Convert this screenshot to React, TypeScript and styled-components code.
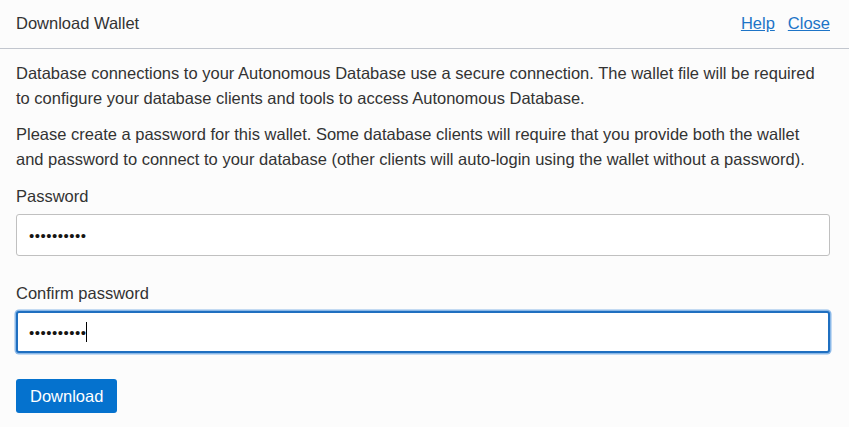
import styled, { createGlobalStyle, css } from "styled-components";

const GlobalStyle = createGlobalStyle`
  html, body {
    margin: 0;
    padding: 0;
    background: #fcfcfc;
  }
  body {
    font-family: "Liberation Sans", Arial, sans-serif;
    color: #333333;
  }
`;

const Dialog = styled.div`
  width: 849px;
  height: 427px;
  background: #fcfcfc;
  box-sizing: border-box;
  overflow: hidden;
`;

const Header = styled.header`
  height: 48px;
  display: flex;
  align-items: center;
  justify-content: space-between;
  padding: 0 19px 0 16px;
  border-bottom: 1px solid #c2c6ce;
`;

const Title = styled.h1`
  margin: 0;
  font-size: 16.5px;
  font-weight: normal;
  color: #333333;
  padding-bottom: 2px;
`;

const Links = styled.nav`
  display: flex;
  gap: 13px;
  padding-bottom: 2px;
`;

const HeaderLink = styled.a`
  font-size: 16.5px;
  color: #1d74c7;
  text-decoration: underline;
  cursor: pointer;
`;

const Body = styled.div`
  padding: 12px 19px 0 16px;
  display: flex;
  flex-direction: column;
`;

const Paragraph = styled.p`
  margin: 0 0 12px;
  font-size: 16.5px;
  line-height: 24.5px;
  color: #333333;
`;

const Field = styled.div`
  display: flex;
  flex-direction: column;
  margin-top: 1px;
  & + & {
    margin-top: 25px;
  }
`;

const Label = styled.label`
  font-size: 16.5px;
  line-height: 24px;
  color: #333333;
  margin-bottom: 6px;
`;

const InputWrap = styled.div`
  position: relative;
`;

const inputText = css`
  font-family: "Liberation Sans", Arial, sans-serif;
  font-size: 15px;
  letter-spacing: 0.5px;
`;

const Input = styled.input<{ $focused?: boolean }>`
  ${inputText};
  box-sizing: border-box;
  display: block;
  height: 42px;
  width: 100%;
  padding: 0 12px;
  color: #161513;
  background: #ffffff;
  border: 1px solid #c0c0c0;
  border-radius: 3px;
  outline: none;
  ${(p) =>
    p.$focused &&
    css`
      caret-color: transparent;
      border: 2px solid #1f6fc0;
      box-shadow: 0 0 0 1.5px #8ab8e8;
      padding: 0 11px;
    `}
`;

/* fake text caret drawn over the focused field */
const CaretLayer = styled.div`
  ${inputText};
  position: absolute;
  inset: 0;
  display: flex;
  align-items: center;
  padding: 0 13px;
  pointer-events: none;
`;

const Ghost = styled.span`
  visibility: hidden;
  white-space: pre;
`;

const Caret = styled.span`
  display: inline-block;
  width: 1px;
  height: 20px;
  margin-left: -1px;
  background: #000000;
`;

const Actions = styled.div`
  margin-top: 26px;
`;

const Button = styled.button`
  height: 34px;
  padding: 0 14px;
  border: none;
  border-radius: 3px;
  background: #0572ce;
  color: #ffffff;
  font-family: "Liberation Sans", Arial, sans-serif;
  font-size: 16.5px;
  cursor: pointer;
`;

const password = "Welcome123";
const bullets = "\u2022".repeat(password.length);

export default function App() {
  return (
    <>
      <GlobalStyle />
      <Dialog>
        <Header>
          <Title>Download Wallet</Title>
          <Links>
            <HeaderLink>Help</HeaderLink>
            <HeaderLink>Close</HeaderLink>
          </Links>
        </Header>
        <Body>
          <Paragraph>
            Database connections to your Autonomous Database use a secure connection. The wallet file will be required
            to configure your database clients and tools to access Autonomous Database.
          </Paragraph>
          <Paragraph>
            Please create a password for this wallet. Some database clients will require that you provide both the wallet
            and password to connect to your database (other clients will auto-login using the wallet without a password).
          </Paragraph>
          <Field>
            <Label htmlFor="pw">Password</Label>
            <InputWrap>
              <Input id="pw" type="password" defaultValue={password} />
            </InputWrap>
          </Field>
          <Field>
            <Label htmlFor="pw2">Confirm password</Label>
            <InputWrap>
              <Input id="pw2" type="password" defaultValue={password} $focused />
              <CaretLayer>
                <Ghost>{bullets}</Ghost>
                <Caret />
              </CaretLayer>
            </InputWrap>
          </Field>
          <Actions>
            <Button>Download</Button>
          </Actions>
        </Body>
      </Dialog>
    </>
  );
}
